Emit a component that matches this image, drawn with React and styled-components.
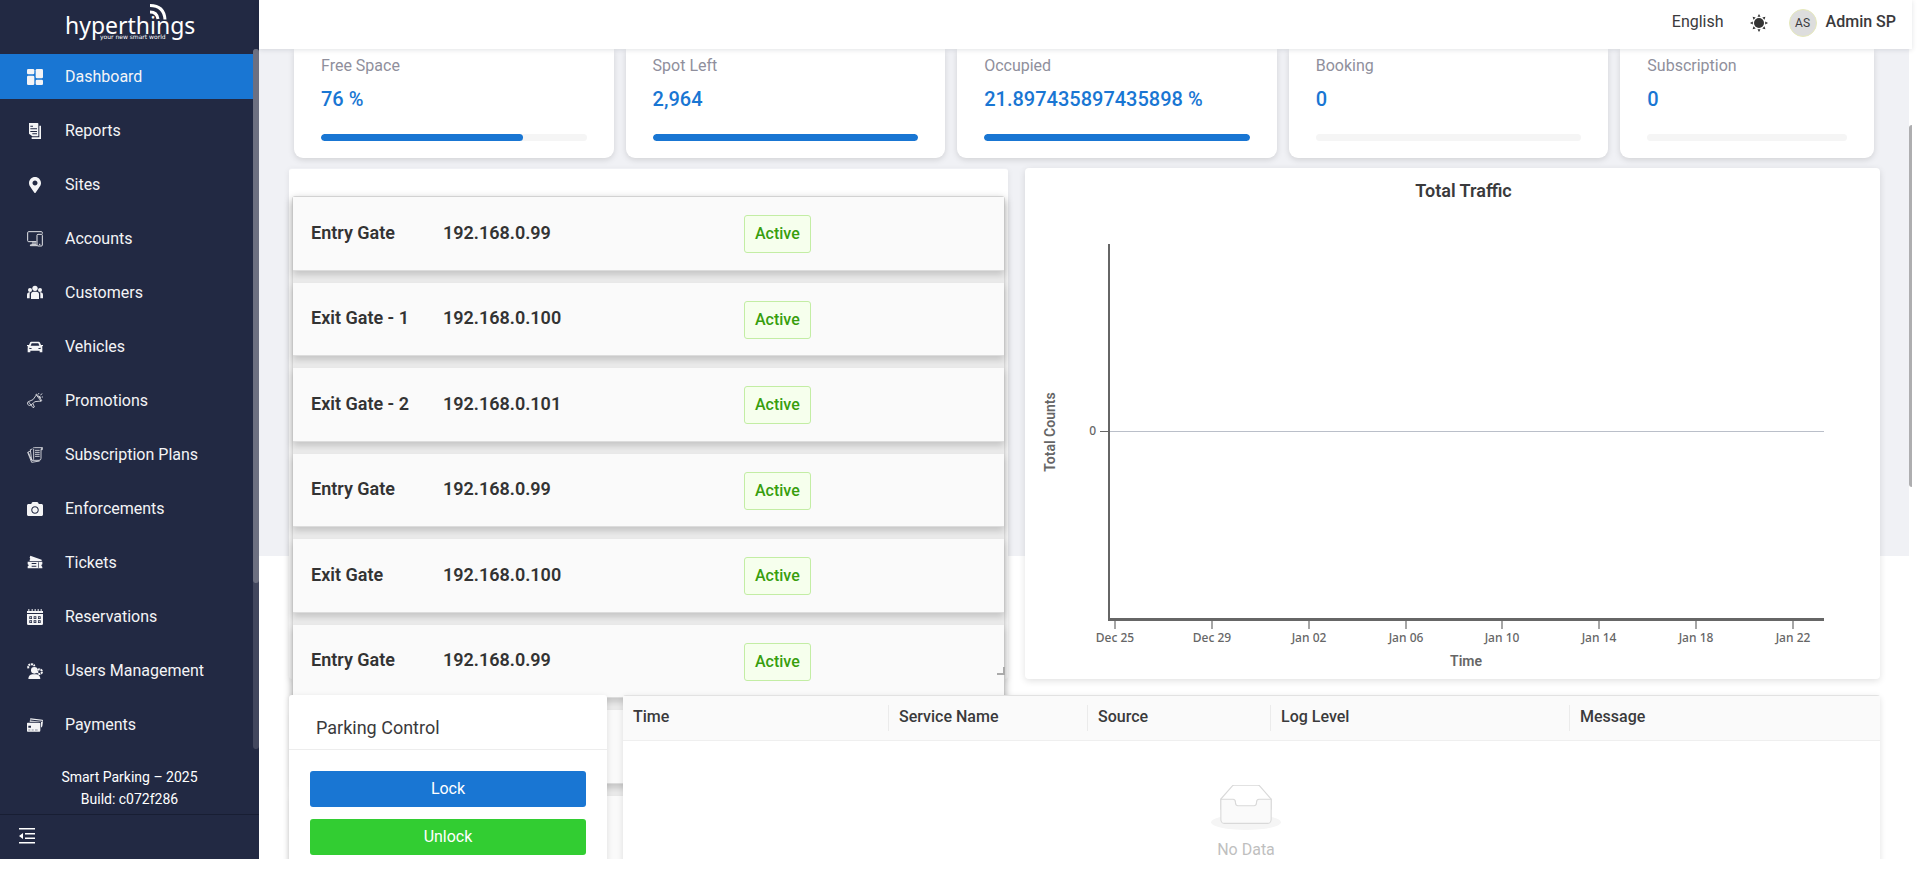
import React from "react";
import styled, { createGlobalStyle } from "styled-components";
import { FaMapMarkerAlt, FaCamera } from "react-icons/fa";

const Global = createGlobalStyle`
  * { box-sizing: border-box; }
  body { margin: 0; background: #fff; font-family: Roboto, "Liberation Sans", sans-serif; font-size: 16px; color: #3a3a3c; overflow: hidden; }
  button { font: inherit; }
`;

const Shell = styled.div`
  display: grid;
  grid-template-columns: 259px minmax(0, 1fr);
  height: 100vh;
  padding: 0 7px 11px 0;
  overflow: hidden;
`;
const Sidebar = styled.aside`
  display: flex;
  flex-direction: column;
  min-height: 0;
  background: #222943;
  color: #f4f4f6;
`;
const Brand = styled.div`
  flex: none;
  height: 49px;
  padding-left: 64px;
`;
const MenuScroll = styled.nav`
  display: flex;
  height: 700px;
  min-height: 0;
`;
const Menu = styled.ul`
  flex: 1;
  display: flex;
  flex-direction: column;
  gap: 9px;
  margin: 0;
  padding: 5px 0 0;
  list-style: none;
  overflow: hidden;
`;
const MenuLink = styled.a`
  display: flex;
  align-items: center;
  gap: 22px;
  height: 45px;
  padding-left: 27px;
  color: inherit;
  text-decoration: none;
  background: ${(p) => (p.$active ? "#1976d3" : "transparent")};
  svg { flex: none; width: 16px; height: 16px; }
`;
const MenuTrack = styled.div`
  width: 6px;
  background: #42475e;
  border-radius: 3px;
  &::before { content: ""; display: block; height: 534px; border-radius: 3px; background: #6d7081; }
`;
const Build = styled.p`
  flex: 1;
  margin: 0;
  padding-top: 17px;
  font-size: 14px;
  line-height: 22px;
  text-align: center;
  color: #fff;
`;
const Collapse = styled.button`
  display: flex;
  align-items: center;
  height: 45px;
  padding: 0 0 2px 19px;
  border: 0;
  border-top: 1px solid #181e33;
  background: none;
  color: #fff;
`;

const Main = styled.div`
  display: flex;
  flex-direction: column;
  min-width: 0;
  min-height: 0;
`;
const Header = styled.header`
  flex: none;
  position: relative;
  z-index: 3;
  display: flex;
  align-items: center;
  justify-content: flex-end;
  height: 49px;
  padding: 0 16px 6px 0;
  background: #fff;
  box-shadow: 0 1px 5px rgba(0, 21, 41, 0.12);
`;
const Language = styled.button`
  margin-right: 26px;
  padding: 0;
  border: 0;
  background: none;
  color: inherit;
`;
const ThemeButton = styled.button`
  display: flex;
  margin-right: 21px;
  padding: 2px 0 0;
  border: 0;
  background: none;
  color: #333;
`;
const Avatar = styled.span`
  display: grid;
  place-items: center;
  width: 28px;
  height: 28px;
  margin: 2px 9px 0 0;
  border: 1px solid #e6e9bb;
  border-radius: 50%;
  background: #ddd;
  font-size: 12px;
`;
const UserName = styled.span`
  font-weight: 500;
`;

const ScrollArea = styled.div`
  flex: 1;
  display: flex;
  min-height: 0;
`;
const Content = styled.main`
  flex: 1;
  min-width: 0;
  padding: 0 29px 0 30px;
  overflow: hidden;
  background: linear-gradient(#f0f1f5, #f0f1f5) 0 0 / 100% 507px no-repeat;
`;
const PageTrack = styled.div`
  width: 3px;
  padding-top: 76px;
  &::before { content: ""; display: block; height: 362px; border-radius: 3px 0 0 3px; background: #aeaeb0; }
`;

const Stats = styled.section`
  display: grid;
  grid-template-columns: repeat(4, minmax(0, 320fr)) minmax(0, 254fr);
  gap: 12px;
  margin: 0 6px 10px 5px;
`;
const StatCard = styled.article`
  height: 109px;
  padding: 7px 27px 0;
  border-radius: 0 0 9px 9px;
  background: #fff;
  box-shadow: 0 2px 6px rgba(0, 0, 0, 0.13);
`;
const StatLabel = styled.h2`
  margin: 0;
  font-size: 16px;
  font-weight: 400;
  line-height: 20px;
  color: #8f8f9c;
`;
const StatValue = styled.p`
  margin: 10px 0 0;
  font-size: 20px;
  font-weight: 500;
  line-height: 26px;
  color: #1976d3;
`;
const Meter = styled.div`
  height: 7px;
  margin-top: 22px;
  border-radius: 4px;
  background: #f5f5f5;
  overflow: hidden;
`;
const MeterFill = styled.div`
  height: 100%;
  border-radius: 4px;
  background: #1976d3;
`;

const Overview = styled.div`
  display: grid;
  grid-template-columns: minmax(0, 719fr) minmax(0, 855fr);
  gap: 17px;
  height: 511px;
  margin-bottom: 16px;
`;
const GatePanel = styled.section`
  position: relative;
  min-height: 0;
  padding: 27px 3px 0;
  border-radius: 3px;
  background: #fff;
  box-shadow: 0 2px 6px rgba(0, 0, 0, 0.08);
  border-top: 1px solid #f0f1f5;
`;
const GateList = styled.ul`
  display: grid;
  grid-auto-rows: minmax(0, 1fr);
  gap: 12px;
  height: 674px;
  margin: 0;
  padding: 0;
  list-style: none;
  border: 1px solid #d6d6d6;
  border-radius: 3px;
  background: #ececec;
  box-shadow: 0 3px 8px rgba(0, 0, 0, 0.25);
`;
const GateRow = styled.li`
  display: grid;
  grid-template-columns: 132px 301px auto;
  align-items: center;
  justify-content: start;
  padding: 0 0 2px 18px;
  border-bottom: 1px solid #dcdcdc;
  background: #fafafa;
  box-shadow: 0 4px 7px rgba(0, 0, 0, 0.17);
  font-size: 18px;
  font-weight: 600;
  color: #333;
`;
const Status = styled.span`
  margin-top: 4px;
  padding: 0 10px;
  border: 1px solid #c3eda4;
  border-radius: 3px;
  background: #f6ffed;
  font-size: 16px;
  font-weight: 500;
  line-height: 36px;
  color: #389e0d;
`;
const ResizeGrip = styled.svg`
  position: absolute;
  right: 3px;
  bottom: 4px;
`;

const ChartPanel = styled.section`
  display: flex;
  flex-direction: column;
  min-height: 0;
  border-radius: 4px;
  background: #fff;
  box-shadow: 0 2px 7px rgba(0, 0, 0, 0.12);
`;
const ChartTitle = styled.h2`
  margin: 12px 0 0 22px;
  font-size: 18px;
  font-weight: 600;
  line-height: 22px;
  text-align: center;
`;
const Plot = styled.svg`
  display: block;
  width: 100%;
  flex: 1;
  min-height: 0;
  fill: #666;
  .tick { font: 500 12px "Noto Sans", sans-serif; }
  .name { font-size: 14px; font-weight: 600; }
`;

const Lower = styled.div`
  position: relative;
  z-index: 2;
  display: grid;
  grid-template-columns: minmax(0, 318fr) minmax(0, 1257fr);
  gap: 16px;
`;
const ControlCard = styled.section`
  height: 340px;
  border-radius: 3px;
  background: #fff;
  box-shadow: 0 2px 6px rgba(0, 0, 0, 0.12);
`;
const ControlTitle = styled.h2`
  margin: 0;
  padding: 20px 27px 8px;
  border-bottom: 1px solid #ededed;
  font-size: 18px;
  font-weight: 400;
  line-height: 26px;
`;
const ControlBody = styled.div`
  display: grid;
  gap: 12px;
  padding: 21px;
`;
const ControlButton = styled.button`
  height: 36px;
  padding: 0 0 2px;
  border: 0;
  border-radius: 3px;
  background: ${(p) => p.$color};
  color: #fff;
`;
const LogCard = styled.section`
  height: 340px;
  border-top: 1px solid #e2e2e2;
  border-radius: 3px;
  background: #fff;
  box-shadow: 0 2px 6px rgba(0, 0, 0, 0.12);
`;
const LogTable = styled.table`
  width: 100%;
  border-collapse: collapse;
  table-layout: fixed;
`;
const LogHead = styled.th`
  width: ${(p) => p.$width};
  height: 44px;
  padding: 0 10px 3px;
  border-bottom: 1px solid #efefef;
  background:
    linear-gradient(#ebebeb, #ebebeb) right 9px / ${(p) => (p.$last ? "0" : "1px")} 26px no-repeat,
    #fafafa;
  font-weight: 500;
  text-align: left;
`;
const EmptyCell = styled.td`
  padding: 44px 11px 0 0;
  text-align: center;
  color: #bfbfbf;
  line-height: 20px;
  svg { display: block; margin: 0 auto 10px; }
`;

const Line = (props) => (
  <svg viewBox="0 0 24 24" fill="none" stroke="currentColor" strokeWidth="1.4" strokeLinejoin="round" {...props} />
);
const Solid = (props) => <svg viewBox="0 0 24 24" fill="currentColor" {...props} />;

const DashboardIcon = () => (
  <Solid><rect width="11" height="8" rx="2" /><rect y="10" width="11" height="14" rx="2" /><rect x="13" width="11" height="14" rx="2" /><rect x="13" y="16" width="11" height="8" rx="2" /></Solid>
);
const ReportsIcon = () => (
  <Solid>
    <path fillRule="evenodd" d="M3 0h13q1 0 1 1v18q0 1-1 1H8l-5-4zM5 4v1.500h4V4zm0 4v1.500h10V8zm0 4v1.500h10V12zm3 3.500V17h7v-1.500z" />
    <path d="M18.500 4H21v20H7v-2.500h11.500z" />
  </Solid>
);
const AccountsIcon = () => (
  <Line><path d="M14 16H2.500Q1 16 1 14.500V2.500Q1 1 2.500 1h19Q23 1 23 2.500V4M9 16v4m3-4v4M5 22h10M5 22q0-2 2-2h7" /><rect x="15" y="5" width="8" height="17.500" rx="1.500" /><path d="M18 20h2" /></Line>
);
const CustomersIcon = () => (
  <Solid><circle cx="12" cy="5" r="4" /><circle cx="4.500" cy="7.500" r="3" /><circle cx="19.500" cy="7.500" r="3" /><path d="M6 21v-7q0-4 4-4h4q4 0 4 4v7zM0 20v-5q0-4 4-4h1q-1 1-1 3v6zM24 20v-5q0-4-4-4h-1q1 1 1 3v6z" /></Solid>
);
const VehiclesIcon = () => (
  <Solid><path fillRule="evenodd" d="M6.500 4h11q1.500 0 2 1.500L21 9h3v2h-1.500l.5 2v7h-4v-2.500H5V20H1v-7l.5-2H0V9h3l1.500-3.500Q5 4 6.500 4zM7 6.200L5.500 10h13L17 6.200zM3.500 13v2H7v-1zm17 0L17 14v1h3.500z" /></Solid>
);
const PromotionsIcon = () => (
  <Line strokeWidth="1.200"><path d="M2 13l4 5q-3 2-5-1-1-3 1-4zm0 0l7-3 5-7 7 9-9 1-6 5M13 3q1-2 2-1l7 9q0 2-2 1M6 18l3 4 2-1-2-5M18 5q3 0 2 3M17 2l1-2M20 3l3-2M22 6h2" /></Line>
);
const PlansIcon = () => (
  <Line strokeWidth="1.200"><path d="M9 2q0-1 2-1h12q-2 1-2 3v13q0 3-3 3H8q2-1 2-3V3M21 4h2V1M12 5h7M12 8h7M12 11h7M12 14h7M8 3L5 4l2 16M5 6L1 8l6 15 12-2M2 8l5 12" /></Line>
);
const TicketsIcon = () => (
  <Solid><path d="M5 1l17 6v2H4V7q2-1 0-3z" /><path fillRule="evenodd" d="M1 10h22v4q-3 1 0 4v2H1v-3q3-1 0-3zm6 2v1.500h7V12zm0 4v1.500h7V16zm10-5v8h1v-8z" /></Solid>
);
const ReservationsIcon = () => (
  <Solid>
    <path d="M0 3h2V0h1.500v3H7V0h1.500v3h3V0H13v3h3V0h1.500v3h3V0H22v3h2v3H0z" />
    <path fillRule="evenodd" d="M0 7.500h24V22q0 2-2 2H2q-2 0-2-2zM3.500 11v4h4v-4zm6.500 0v4h4v-4zm6.500 0v4h4v-4zm-13 6v4h4v-4zm6.500 0v4h4v-4zm6.500 0v4h4v-4z" />
    <path d="M4.500 12h2v2h-2zM11 12h2v2h-2zM17.500 12h2v2h-2zM4.500 18h2v2h-2zM11 18h2v2h-2zM17.500 18h2v2h-2z" opacity=".7" />
  </Solid>
);
const UsersIcon = () => (
  <Solid>
    <circle cx="11" cy="11" r="5" />
    <path d="M2 24q0-6 6-7h6q6 1 6 7z" />
    <path d="M2 8q-1-6 5-6 4 0 4 3" fill="none" stroke="currentColor" strokeWidth="3" strokeDasharray="3 1" />
    <circle cx="19" cy="13" r="3.500" fill="none" stroke="currentColor" strokeWidth="3" strokeDasharray="3 1" />
  </Solid>
);
const PaymentsIcon = () => (
  <Solid><path d="M5 2l18 2q1 0 1 2l-1 8-2 2V8q0-1-2-1H4z" /><path d="M5 4.500l18 2" stroke="#222943" strokeWidth="1.500" /><path fillRule="evenodd" d="M1 8.500h17q2 0 2 1V20q0 2-1 2H1q-1 0-1-1V9.500q0-1 1-1zm1 4.500v3h4v-3zm0 6v1h3v-1zm5 0v1h3v-1zm5 0v1h4v-1z" /></Solid>
);

const menu = [
  ["Dashboard", DashboardIcon],
  ["Reports", ReportsIcon],
  ["Sites", FaMapMarkerAlt],
  ["Accounts", AccountsIcon],
  ["Customers", CustomersIcon],
  ["Vehicles", VehiclesIcon],
  ["Promotions", PromotionsIcon],
  ["Subscription Plans", PlansIcon],
  ["Enforcements", FaCamera],
  ["Tickets", TicketsIcon],
  ["Reservations", ReservationsIcon],
  ["Users Management", UsersIcon],
  ["Payments", PaymentsIcon],
];
const stats = [
  ["Free Space", "76 %", 76],
  ["Spot Left", "2,964", 100],
  ["Occupied", "21.897435897435898 %", 100],
  ["Booking", "0", 0],
  ["Subscription", "0", 0],
];
const gates = [
  ["Entry Gate", "192.168.0.99"],
  ["Exit Gate - 1", "192.168.0.100"],
  ["Exit Gate - 2", "192.168.0.101"],
  ["Entry Gate", "192.168.0.99"],
  ["Exit Gate", "192.168.0.100"],
  ["Entry Gate", "192.168.0.99"],
  ["", ""],
  ["", ""],
];
const dates = ["Dec 25", "Dec 29", "Jan 02", "Jan 06", "Jan 10", "Jan 14", "Jan 18", "Jan 22"];
const columns = [
  ["Time", "266px"],
  ["Service Name", "199px"],
  ["Source", "183px"],
  ["Log Level", "299px"],
  ["Message", "auto"],
];

const Logo = () => (
  <svg width="140" height="46" viewBox="0 0 140 46" fill="#fff" role="img" aria-label="hyperthings">
    <text x="1" y="34" fontFamily="Noto Sans" fontSize="23">hyperthings</text>
    <text x="36" y="39" fontFamily="DejaVu Sans" fontSize="6">your new smart world</text>
    <path d="M86 5.500q14 0 15 14M86 12q7 0 8 7" fill="none" stroke="#fff" strokeWidth="3" />
  </svg>
);

const TrafficChart = () => (
  <Plot viewBox="0 0 855 477" role="img" aria-label="Total traffic over time">
    <path d="M84 229.500H799" stroke="#babfc9" />
    <path d="M84 42V418" stroke="#666" strokeWidth="2" />
    <path d="M83 417.500H799" stroke="#666" strokeWidth="3" />
    <path d="M75 229.500h8" stroke="#666" />
    <text className="tick" x="71" y="233" textAnchor="end">0</text>
    {dates.map((d, i) => (
      <g key={d}>
        <path d={`M${90 + Math.round(i * 96.85)} 419v8`} stroke="#888" strokeWidth="1.500" />
        <text className="tick" x={90 + Math.round(i * 96.85)} y="440" textAnchor="middle">{d}</text>
      </g>
    ))}
    <text className="name" x="441" y="464" textAnchor="middle">Time</text>
    <text className="name" transform="translate(30 230) rotate(-90)" textAnchor="middle">Total Counts</text>
  </Plot>
);

export default function App() {
  return (
    <Shell>
      <Global />
      <Sidebar>
        <Brand><Logo /></Brand>
        <MenuScroll>
          <Menu>
            {menu.map(([label, Icon], i) => (
              <li key={label}><MenuLink href="#" $active={i === 0}><Icon />{label}</MenuLink></li>
            ))}
          </Menu>
          <MenuTrack />
        </MenuScroll>
        <Build>Smart Parking – 2025<br />Build: c072f286</Build>
        <Collapse aria-label="Collapse menu">
          <svg width="16" height="16" viewBox="0 0 16 16" fill="currentColor"><path d="M0 0h16v1.500H0zM6 5h10v1.500H6zM6 9.500h10V11H6zM0 14h16v1.500H0zM0 8l4-3v6z" /></svg>
        </Collapse>
      </Sidebar>
      <Main>
        <Header>
          <Language>English</Language>
          <ThemeButton aria-label="Toggle theme">
            <svg width="18" height="18" viewBox="0 0 18 18" fill="currentColor">
              <circle cx="9" cy="9" r="5" />
              {[0, 45, 90, 135, 180, 225, 270, 315].map((a) => (
                <path key={a} d="M9 0l1.500 2.800h-3z" transform={`rotate(${a} 9 9)`} />
              ))}
            </svg>
          </ThemeButton>
          <Avatar>AS</Avatar>
          <UserName>Admin SP</UserName>
        </Header>
        <ScrollArea>
          <Content>
            <Stats>
              {stats.map(([label, value, pct]) => (
                <StatCard key={label}>
                  <StatLabel>{label}</StatLabel>
                  <StatValue>{value}</StatValue>
                  <Meter><MeterFill style={{ width: `${pct}%` }} /></Meter>
                </StatCard>
              ))}
            </Stats>
            <Overview>
              <GatePanel>
                <GateList>
                  {gates.map(([name, ip], i) => (
                    <GateRow key={i}>
                      <span>{name}</span>
                      <span>{ip}</span>
                      {name && <Status>Active</Status>}
                    </GateRow>
                  ))}
                </GateList>
                <ResizeGrip width="8" height="8" viewBox="0 0 8 8" fill="none" stroke="#aaa" strokeWidth="2"><path d="M7 0v7H0" /></ResizeGrip>
              </GatePanel>
              <ChartPanel>
                <ChartTitle>Total Traffic</ChartTitle>
                <TrafficChart />
              </ChartPanel>
            </Overview>
            <Lower>
              <ControlCard>
                <ControlTitle>Parking Control</ControlTitle>
                <ControlBody>
                  <ControlButton $color="#1976d3">Lock</ControlButton>
                  <ControlButton $color="#32cd32">Unlock</ControlButton>
                </ControlBody>
              </ControlCard>
              <LogCard>
                <LogTable>
                  <thead>
                    <tr>
                      {columns.map(([name, width], i) => (
                        <LogHead key={name} $width={width} $last={i === 4}>{name}</LogHead>
                      ))}
                    </tr>
                  </thead>
                  <tbody>
                    <tr>
                      <EmptyCell colSpan={5}>
                        <svg width="70" height="45" viewBox="0 0 64 41">
                          <ellipse fill="#f5f5f5" cx="32" cy="34" rx="32" ry="7" />
                          <g fillRule="nonzero" stroke="#d9d9d9">
                            <path fill="#fff" d="M55 12.760L44.854 1.258C44.367.474 43.656 0 42.907 0H21.093c-.749 0-1.460.474-1.947 1.257L9 12.761V22h46v-9.240z" />
                            <path d="M41.613 15.931c0-1.605.994-2.930 2.227-2.931H55v18.137C55 33.260 53.680 35 52.050 35h-40.100C10.320 35 9 33.259 9 31.137V13h11.160c1.233 0 2.227 1.323 2.227 2.928v.022c0 1.605 1.005 2.901 2.237 2.901h14.752c1.232 0 2.237-1.308 2.237-2.913v-.007z" fill="#fafafa" />
                          </g>
                        </svg>
                        No Data
                      </EmptyCell>
                    </tr>
                  </tbody>
                </LogTable>
              </LogCard>
            </Lower>
          </Content>
          <PageTrack />
        </ScrollArea>
      </Main>
    </Shell>
  );
}
